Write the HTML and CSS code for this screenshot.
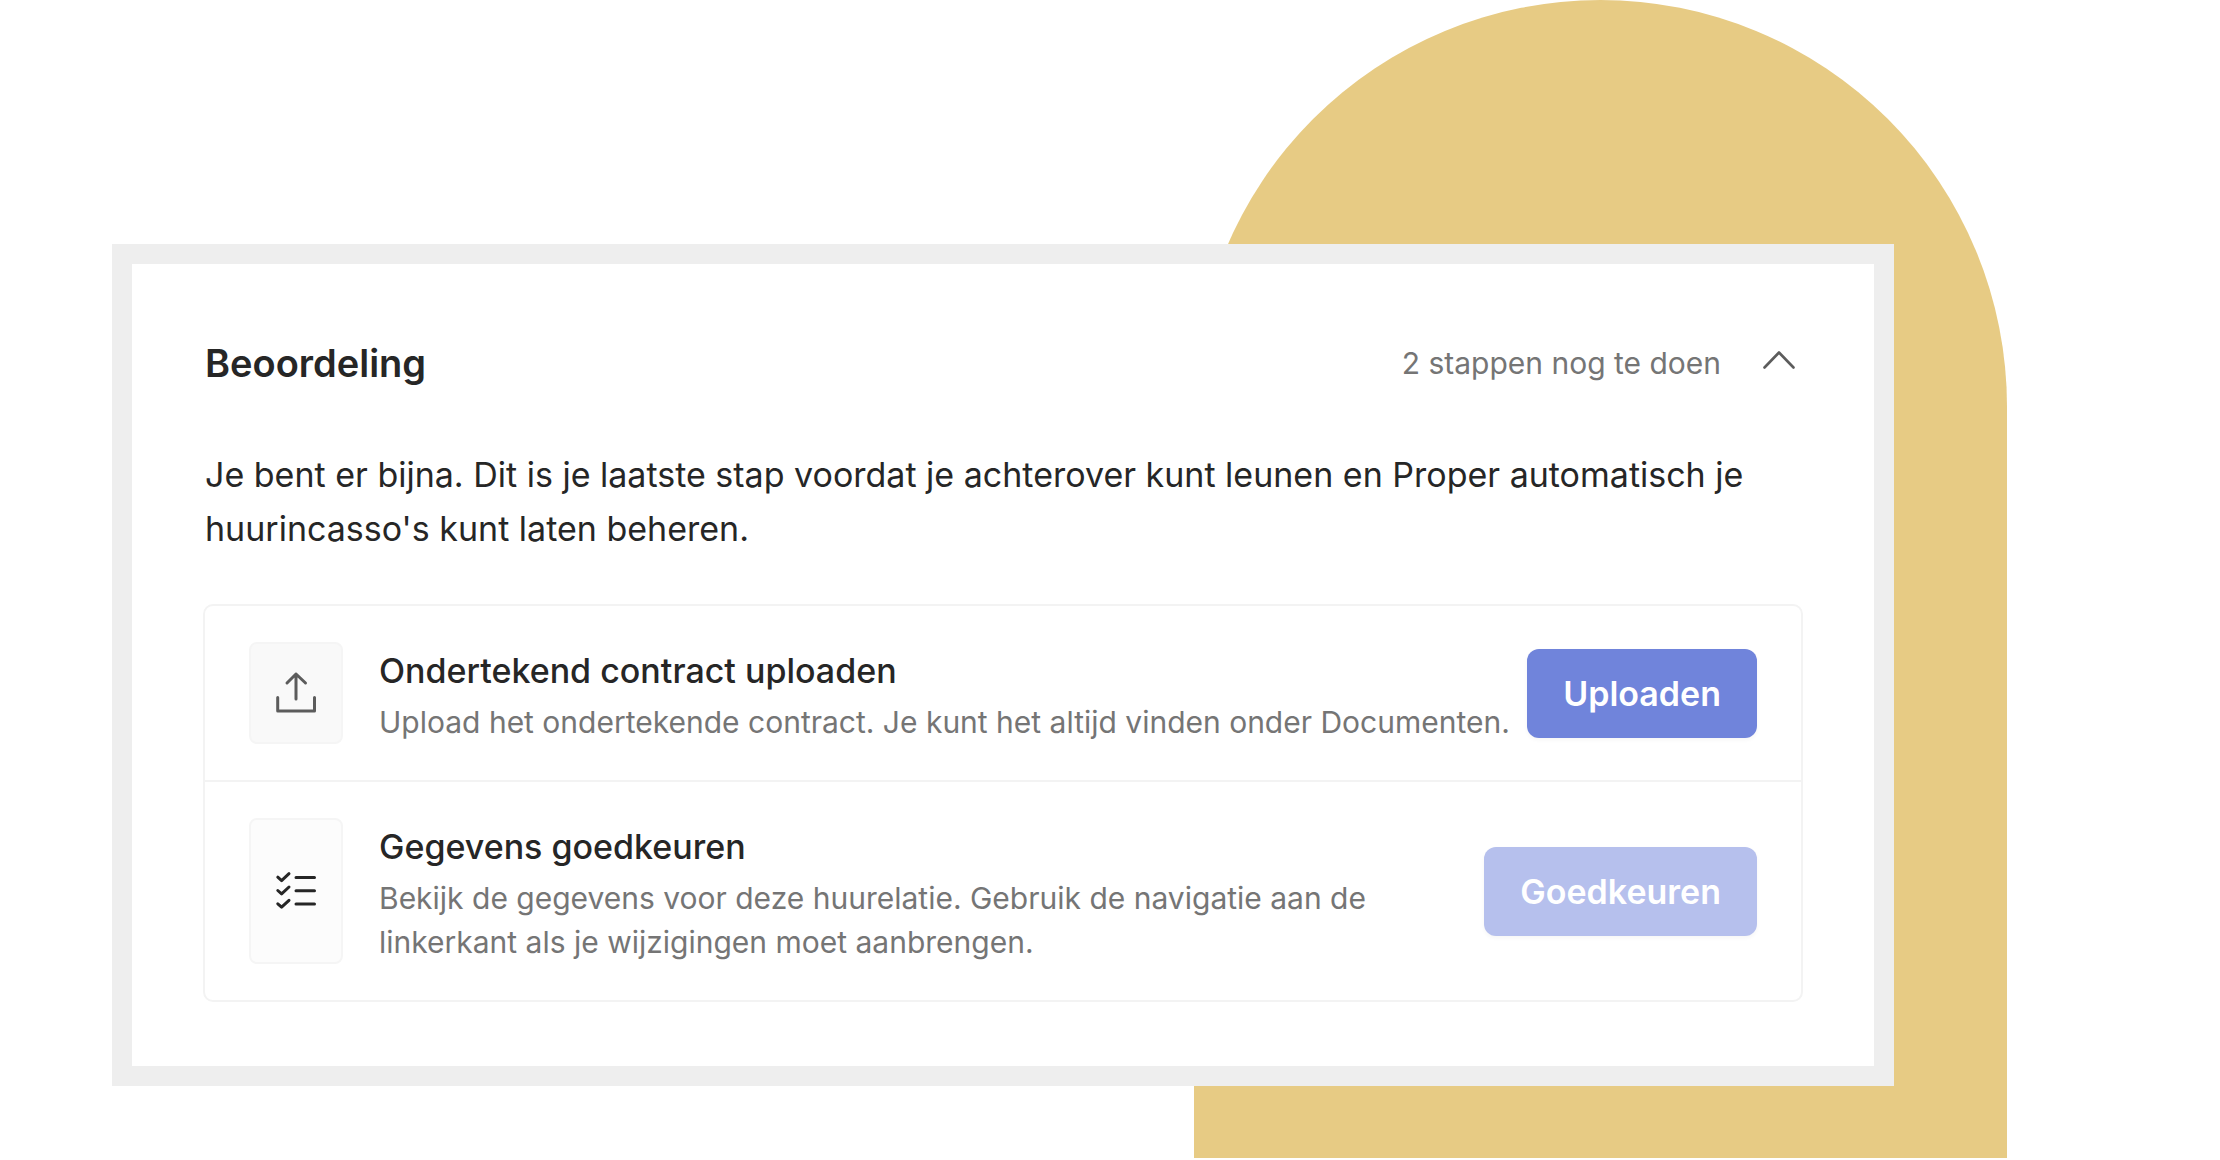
FILE: index.html
```html
<!DOCTYPE html>
<html lang="nl">
<head>
<meta charset="utf-8">
<meta name="viewport" content="width=device-width, initial-scale=1">
<title>Beoordeling</title>
<link rel="stylesheet" href="styles.css">
</head>
<body>
<main class="page">
  <div class="arch" aria-hidden="true"></div>
  <section class="card">
    <header class="card-header">
      <h1 class="card-title">Beoordeling</h1>
      <span class="card-status">2 stappen nog te doen</span>
      <button class="toggle" type="button" aria-label="Inklappen" aria-expanded="true">
        <svg width="36" height="24" viewBox="0 0 36 24" fill="none" stroke="currentColor" stroke-width="2.6" stroke-linecap="round" stroke-linejoin="round"><path d="M3.500 19.500 18 4.500l14.500 15"/></svg>
      </button>
    </header>
    <p class="intro">Je bent er bijna. Dit is je laatste stap voordat je achterover kunt leunen en Proper automatisch je huurincasso's kunt laten beheren.</p>
    <ul class="steps">
      <li class="step">
        <div class="tile">
          <svg width="44" height="44" viewBox="0 0 44 44" fill="none" stroke="currentColor" stroke-width="3" stroke-linecap="round" stroke-linejoin="round"><path d="M3.700 26.500V40h36.800V26.500M22 28V3M13 12l9-9 9.500 9"/></svg>
        </div>
        <div class="step-text">
          <h2 class="step-title">Ondertekend contract uploaden</h2>
          <p class="step-desc">Upload het ondertekende contract. Je kunt het altijd vinden onder Documenten.</p>
        </div>
        <button class="button" type="button">Uploaden</button>
      </li>
      <li class="step">
        <div class="tile tile-dark">
          <svg width="44" height="44" viewBox="0 0 44 44" fill="none" stroke="currentColor" stroke-width="3" stroke-linecap="round" stroke-linejoin="round"><path d="M3.800 8.200 7.600 11.600 15 4.700M22 8.400h18.500M3.800 21.500l3.800 3.400L15 18M22 21.700h18.500M3.800 34.800l3.800 3.400 7.400-6.900M22 35h18.500"/></svg>
        </div>
        <div class="step-text">
          <h2 class="step-title">Gegevens goedkeuren</h2>
          <p class="step-desc">Bekijk de gegevens voor deze huurelatie. Gebruik de navigatie aan de linkerkant als je wijzigingen moet aanbrengen.</p>
        </div>
        <button class="button" type="button" disabled>Goedkeuren</button>
      </li>
    </ul>
  </section>
</main>
</body>
</html>
```
FILE: styles.css
```css
* {
  box-sizing: border-box;
}

body {
  margin: 0;
  background: #fff;
  color: #262626;
  font-family: Inter, "Liberation Sans", sans-serif;
}

h1,
h2,
p,
ul {
  margin: 0;
  padding: 0;
}

svg {
  display: block;
}

.page {
  position: relative;
  min-height: 100vh;
  padding: 244px 326px 74px 112px;
}

/* Decorative arch behind the card */
.arch {
  position: absolute;
  top: 0;
  right: 213px;
  bottom: 2px;
  width: 813px;
  border-radius: 407px 407px 0 0;
  background: #e7cb84;
}

.card {
  position: relative;
  padding: 72px 71px 64px;
  border: 20px solid #eee;
  background: #fff;
}

.card-header {
  display: flex;
  align-items: center;
  padding: 0 6px 0 2px;
  margin-bottom: 58px;
}

.card-title {
  flex: 1;
  font-size: 38px;
  font-weight: 600;
  line-height: 54px;
}

.card-status {
  color: #757575;
  font-size: 30px;
  line-height: 44px;
}

.toggle {
  margin-left: 40px;
  padding: 0 0 6px;
  border: 0;
  background: none;
  color: #5c5c5c;
}

.intro {
  padding-left: 2px;
  margin-bottom: 48px;
  font-size: 34px;
  line-height: 54px;
}

.steps {
  border: 2px solid #f3f3f3;
  border-radius: 10px;
  list-style: none;
}

.step {
  display: flex;
  align-items: center;
  padding: 36px 44px;
}

.step + .step {
  border-top: 2px solid #f3f3f3;
}

.tile {
  display: flex;
  flex: none;
  align-items: center;
  justify-content: center;
  align-self: stretch;
  width: 94px;
  border: 2px solid #f5f5f5;
  border-radius: 8px;
  background: #f9f9f9;
  color: #5c5c5c;
}

.tile-dark {
  background: #fcfcfc;
  color: #262626;
}

.step-text {
  flex: 1;
  margin: 0 12px 0 36px;
}

.step-title {
  font-size: 34px;
  font-weight: 500;
  line-height: 58px;
}

.step-desc {
  color: #757575;
  font-size: 30px;
  line-height: 44px;
}

.button {
  flex: none;
  padding: 0 36px;
  border: 0;
  border-radius: 12px;
  background: #7084db;
  box-shadow: 0 2px 4px rgb(0 0 0 / 4%);
  color: #fff;
  font: 600 34px/89px Inter, "Liberation Sans", sans-serif;
}

.button:disabled {
  background: #b6c0ed;
}
```
